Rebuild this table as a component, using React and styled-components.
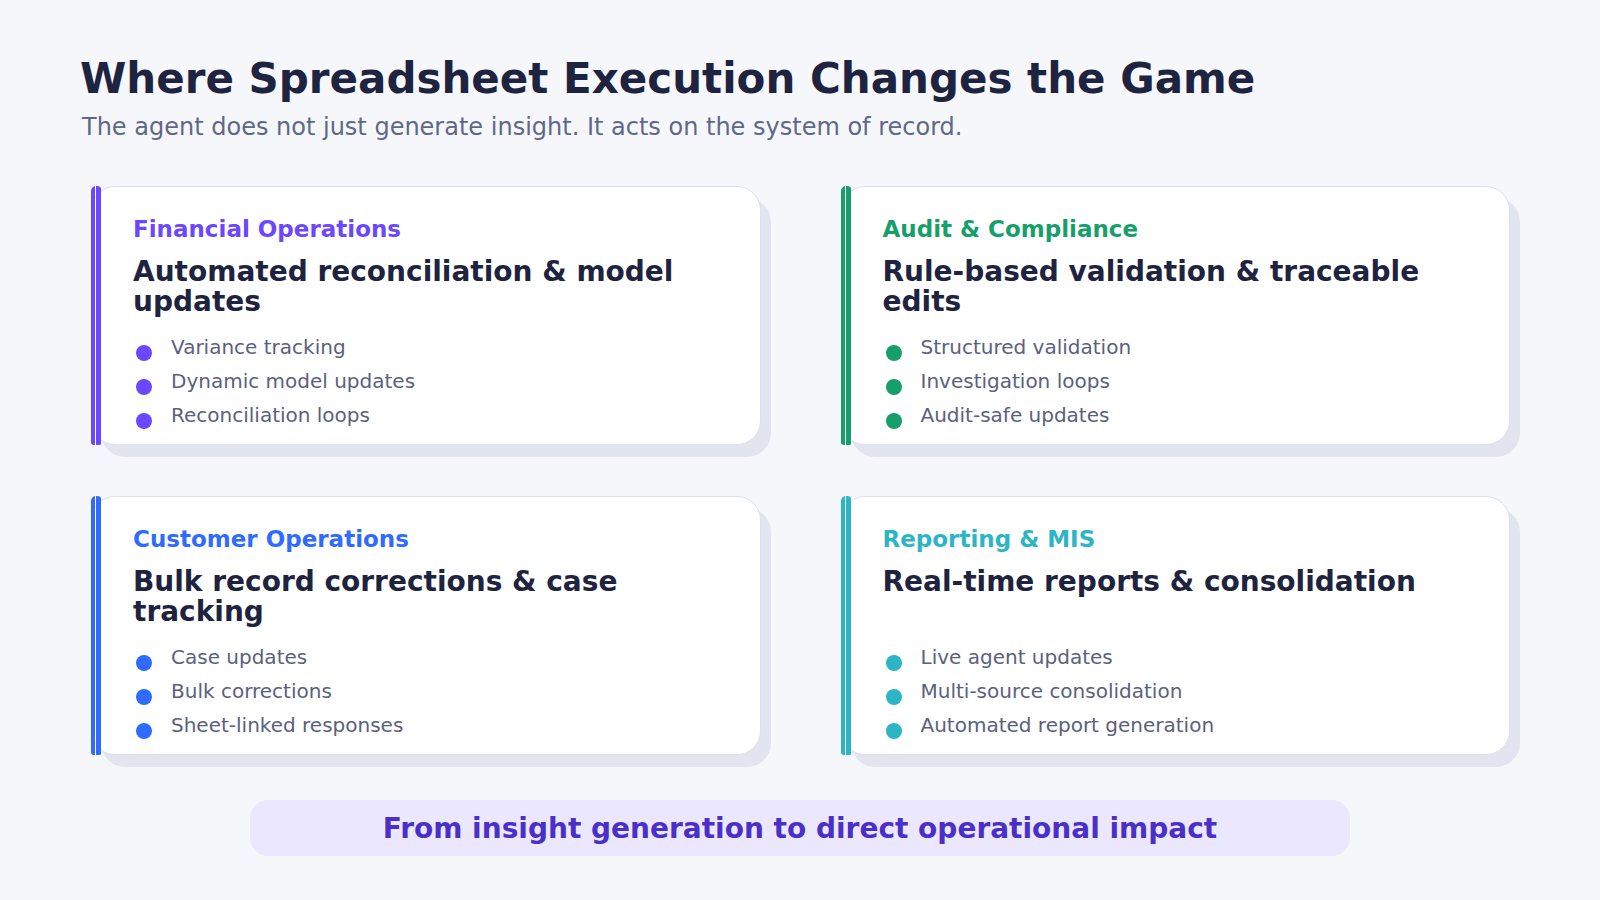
import React from "react";
import styled, { createGlobalStyle } from "styled-components";

const GlobalStyle = createGlobalStyle`
  html, body {
    margin: 0;
    padding: 0;
    background: #f6f7fb;
  }
  body {
    font-family: "DejaVu Sans", "Liberation Sans", sans-serif;
  }
`;

const areas = [
  {
    label: "Financial Operations",
    color: "#6b47ff",
    title: "Automated reconciliation & model updates",
    points: ["Variance tracking", "Dynamic model updates", "Reconciliation loops"],
  },
  {
    label: "Audit & Compliance",
    color: "#169f6b",
    title: "Rule-based validation & traceable edits",
    points: ["Structured validation", "Investigation loops", "Audit-safe updates"],
  },
  {
    label: "Customer Operations",
    color: "#2f6bff",
    title: "Bulk record corrections & case tracking",
    points: ["Case updates", "Bulk corrections", "Sheet-linked responses"],
  },
  {
    label: "Reporting & MIS",
    color: "#2cb6c5",
    title: "Real-time reports & consolidation",
    points: ["Live agent updates", "Multi-source consolidation", "Automated report generation"],
  },
];

const App = () => {
  return (
    <Page>
      <GlobalStyle />
      <Title>Where Spreadsheet Execution Changes the Game</Title>
      <Subtitle>
        The agent does not just generate insight. It acts on the system of record.
      </Subtitle>
      <Grid>
        {areas.map((area) => (
          <Card key={area.label} $accent={area.color}>
            <Label $accent={area.color}>{area.label}</Label>
            <Heading>{area.title}</Heading>
            <Points>
              {area.points.map((p) => (
                <Point key={p}>
                  <Dot $accent={area.color} />
                  <span>{p}</span>
                </Point>
              ))}
            </Points>
          </Card>
        ))}
      </Grid>
      <Banner>From insight generation to direct operational impact</Banner>
    </Page>
  );
};

const Page = styled.div`
  width: 1600px;
  height: 900px;
  box-sizing: border-box;
  padding: 53px 80px 0 80px;
  display: flex;
  flex-direction: column;
`;

const Title = styled.h1`
  margin: 0;
  font-size: 42px;
  line-height: 52px;
  font-weight: 700;
  color: #1e2340;
`;

const Subtitle = styled.p`
  margin: 8px 0 0 2px;
  font-size: 24px;
  line-height: 28px;
  color: #5f6887;
`;

const Grid = styled.div`
  margin-top: 45px;
  padding: 0 10px 0 11px;
  display: grid;
  grid-template-columns: 1fr 1fr;
  column-gap: 80px;
  row-gap: 51px;
`;

const Card = styled.div`
  position: relative;
  height: 259px;
  box-sizing: border-box;
  padding: 29px 30px 0 41px;
  background: #ffffff;
  border: 1px solid #dde0ee;
  border-radius: 24px;
  box-shadow: 10px 12px 0 #e2e5ef;

  &::before {
    content: "";
    position: absolute;
    left: -1px;
    top: -1px;
    bottom: -1px;
    width: 11px;
    border-radius: 5px 5px 3px 3px;
    background: linear-gradient(
      90deg,
      ${(p) => p.$accent} 0 4px,
      rgba(255, 255, 255, 0.55) 4px 5px,
      ${(p) => p.$accent} 5px 10px,
      transparent 10px
    );
  }
`;

const Label = styled.div`
  font-size: 23px;
  line-height: 27.6px;
  font-weight: 700;
  color: ${(p) => p.$accent};
`;

const Heading = styled.h2`
  margin: 13px 0 0;
  min-height: 60px;
  font-size: 28px;
  line-height: 30px;
  font-weight: 700;
  color: #1e2340;
`;

const Points = styled.ul`
  margin: 18px 0 0;
  padding: 0;
  list-style: none;
  display: flex;
  flex-direction: column;
  gap: 8px;
`;

const Point = styled.li`
  display: flex;
  align-items: flex-start;
  font-size: 20px;
  line-height: 24px;
  color: #5a6180;
`;

const Dot = styled.span`
  flex: none;
  width: 16px;
  height: 16px;
  margin: 10px 19px 0 3px;
  border-radius: 50%;
  background: ${(p) => p.$accent};
`;

const Banner = styled.div`
  align-self: center;
  margin: 45px 0 0 0;
  width: 1100px;
  height: 56px;
  display: flex;
  align-items: center;
  justify-content: center;
  border-radius: 18px;
  background: #ebe7fe;
  color: #4a2fc8;
  font-size: 28px;
  font-weight: 700;
`;

export default App;
